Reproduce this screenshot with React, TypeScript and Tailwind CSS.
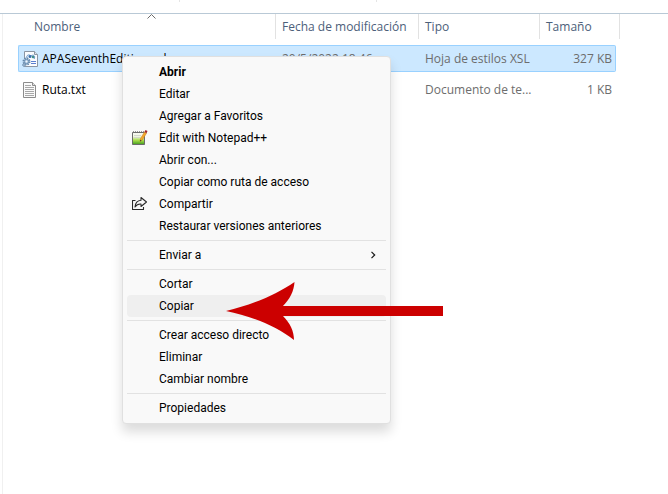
import clsx from "clsx"
import type { ReactNode } from "react"

type FileRow = {
  name: string
  date: string
  type: string
  size: string
  selected?: boolean
  icon: ReactNode
}

type MenuItem = {
  label: string
  icon?: ReactNode
  bold?: boolean
  active?: boolean
  submenu?: boolean
}

function XslIcon() {
  return (
    <svg className="h-4 w-4 shrink-0" viewBox="0 0 16 16" fill="none">
      <path d="M2.5.5h10l3 3v12h-13z" fill="#fbfcfe" stroke="#8b95a3" />
      <path d="M12.5.5v3h3" fill="#dfe5ee" stroke="#8b95a3" />
      <path d="M5 7c-1-3 2-4 4-2 2-2 5 0 3 3" stroke="#5f93c8" />
      <circle cx="8" cy="5.5" r="1.5" fill="#3a6fae" />
      <circle cx="11" cy="6" r="1.2" fill="#3f8f86" />
      <path d="M9 10.5h5M9 12.5h5" stroke="#5b7fd0" />
      <circle cx="4.5" cy="10.5" r="3.2" fill="#c6d8ea" stroke="#6689ab" strokeWidth="1.6" strokeDasharray="1.5 1" />
      <circle cx="4.5" cy="10.5" r="2.2" fill="#a7c2dc" stroke="#6c8fb2" />
      <circle cx="4.5" cy="10.5" r="1" fill="#f2f7fc" />
      <circle cx="2" cy="14" r="1.3" fill="#b4cbe0" stroke="#7292b2" />
    </svg>
  )
}

function TextIcon() {
  return (
    <svg className="h-4 w-4 shrink-0" viewBox="0 0 16 16" fill="none">
      <path d="M1.500.5h9l3 3v12h-12z" fill="#fafafa" stroke="#8c8c8c" />
      <path d="M10.5.5v3h3" fill="#e2e2e2" stroke="#8c8c8c" />
      <path d="M3 3.5h6M3 5.5h9M3 7.5h9M3 9.5h9M3 11.5h9M3 13.5h9" stroke="#a8a8a8" />
    </svg>
  )
}

function NotepadIcon() {
  return (
    <svg className="h-4 w-4" viewBox="0 0 16 16" fill="none">
      <defs>
        <linearGradient id="pad" x1="0" y1="0" x2="0" y2="1">
          <stop offset="0.3" stopColor="#f6f8ee" />
          <stop offset="0.65" stopColor="#a8dd4a" />
          <stop offset="1" stopColor="#3f9a1d" />
        </linearGradient>
      </defs>
      <path d="M.5 2.500h12v12H.5z" fill="url(#pad)" stroke="#6b6b6b" />
      <path d="M1 1.500h11" stroke="#999" strokeDasharray="1 1" />
      <path d="M2 5.500h7M2 7.500h6" stroke="#d3d9cc" />
      <path d="M8 11.500l.5-3L12.500 2l2 1.200-4 6.500z" fill="#f2a62b" stroke="#c97c18" strokeWidth="0.5" />
      <path d="M12.500 2l1-2 2 1-1 2.200z" fill="#a3262a" />
      <path d="M8 11.500l.3-1.800 1.200.7z" fill="#333" />
    </svg>
  )
}

function ShareIcon() {
  return (
    <svg className="h-4 w-4" viewBox="0 0 16 16" fill="none" stroke="#2b2b2b" strokeWidth="1.1" strokeLinejoin="round">
      <path d="M3.500 4.500H.5v9h11V11" />
      <path d="M9 1.500l5.500 4.500L9 10.500V8C6.500 7.800 4.500 8.800 3 11c.3-3.800 2.500-6.500 6-6.800z" />
    </svg>
  )
}

const columns = ["Nombre", "Fecha de modificación", "Tipo", "Tamaño"]

const files: FileRow[] = [
  {
    name: "APASeventhEdition.xsl",
    date: "20/5/2022 18:46",
    type: "Hoja de estilos XSL",
    size: "327 KB",
    selected: true,
    icon: <XslIcon />,
  },
  {
    name: "Ruta.txt",
    date: "20/5/2022 18:46",
    type: "Documento de te...",
    size: "1 KB",
    icon: <TextIcon />,
  },
]

const menuGroups: MenuItem[][] = [
  [
    { label: "Abrir", bold: true },
    { label: "Editar" },
    { label: "Agregar a Favoritos" },
    { label: "Edit with Notepad++", icon: <NotepadIcon /> },
    { label: "Abrir con..." },
    { label: "Copiar como ruta de acceso" },
    { label: "Compartir", icon: <ShareIcon /> },
    { label: "Restaurar versiones anteriores" },
  ],
  [{ label: "Enviar a", submenu: true }],
  [{ label: "Cortar" }, { label: "Copiar", active: true }],
  [{ label: "Crear acceso directo" }, { label: "Eliminar" }, { label: "Cambiar nombre" }],
  [{ label: "Propiedades" }],
]

function FileTable() {
  return (
    <table className="ml-[15px] w-[602px] table-fixed border-separate border-spacing-0 text-left">
      <colgroup>
        <col />
        <col className="w-[143px]" />
        <col className="w-[121px]" />
        <col className="w-[76px]" />
        <col className="w-1" />
      </colgroup>
      <thead>
        <tr>
          {columns.map((column, i) => (
            <th key={column} className="h-[31px] p-0 align-top font-normal text-[#4c607a]">
              <div
                className={clsx(
                  "relative flex h-[25px] items-center",
                  i === 0 ? "pl-4" : "pl-1.5",
                  i < 3 && "border-r border-[#e2e2e2]"
                )}
              >
                {column}
                {i === 0 && (
                  <svg
                    className="absolute top-0 left-1/2 h-[5px] w-[9px]"
                    viewBox="0 0 9 5"
                    fill="none"
                    stroke="#6b6b6b"
                  >
                    <path d="M.5 4.500l4-4 4 4" />
                  </svg>
                )}
              </div>
            </th>
          ))}
          <td className="h-[31px] p-0 align-top">
            <div className="h-[25px] border-r border-[#e2e2e2]" />
          </td>
        </tr>
      </thead>
      <tbody>
        {files.map((file) => {
          const cell = clsx(
            "flex h-[27px] items-center border-y whitespace-nowrap",
            file.selected ? "border-[#99d1ff] bg-[#cce8ff]" : "border-transparent"
          )
          return (
            <tr key={file.name} className="text-[#6d6d6d]">
              <td className="h-[31px] p-0 align-top">
                <div className={clsx(cell, "gap-1 rounded-l-xs border-l pl-[3px] text-black")}>
                  {file.icon}
                  {file.name}
                </div>
              </td>
              <td className="h-[31px] p-0 align-top">
                <div className={clsx(cell, "pl-1.5")}>{file.date}</div>
              </td>
              <td className="h-[31px] p-0 align-top">
                <div className={clsx(cell, "pl-1.5")}>{file.type}</div>
              </td>
              <td className="h-[31px] p-0 align-top">
                <div className={clsx(cell, "justify-end rounded-r-xs border-r pr-[3px]")}>{file.size}</div>
              </td>
            </tr>
          )
        })}
      </tbody>
    </table>
  )
}

function ContextMenu() {
  return (
    <div
      role="menu"
      className="absolute top-14 left-[122px] w-[269px] rounded-sm border border-[#e0e0e0] bg-[#f9f9f9] p-1 font-['Roboto','Noto_Sans',sans-serif] shadow-[0_8px_12px_rgba(0,0,0,0.14)]"
    >
      {menuGroups.map((group, g) => (
        <div key={g}>
          {g > 0 && <hr className="my-[3px] border-[#e2e2e2]" />}
          {group.map((item) => (
            <button
              key={item.label}
              type="button"
              role="menuitem"
              className={clsx(
                "flex h-[22px] w-full items-center rounded-sm pr-2 text-left text-black",
                item.bold && "font-bold",
                item.active ? "bg-[#efefef]" : "hover:bg-[#efefef]"
              )}
            >
              <span className="flex w-8 shrink-0 pl-[5px]">{item.icon}</span>
              <span className="flex-1">{item.label}</span>
              {item.submenu && (
                <svg className="h-2 w-2" viewBox="0 0 8 8" fill="none" stroke="#1a1a1a" strokeWidth="1.2">
                  <path d="M1.500 .8l3.200 3.200-3.200 3.200" />
                </svg>
              )}
            </button>
          ))}
        </div>
      ))}
    </div>
  )
}

function RedArrow() {
  return (
    <svg className="pointer-events-none absolute top-[282px] left-[226px] h-[58px] w-[217px]" viewBox="0 0 217 58">
      <path
        d="M0 29C25 23 50 13 68.500 0 68 9 64 17 57 24H217V34H57C64 41 68 49 68 58 50 44 25 34 0 29z"
        fill="#cc0000"
      />
    </svg>
  )
}

export default function App() {
  return (
    <main className="relative flex min-h-screen flex-col overflow-hidden bg-white font-['Open_Sans','Noto_Sans',sans-serif] text-[12px] leading-4">
      {/* Bottom edge of the address bar */}
      <div className="flex h-3.5 items-start border-b border-[#b9c9d6]">
        <div className="h-0.5 w-[180px] border-r border-[#e5e5e5]" />
        <div className="h-0.5 w-[197px] border-r border-[#e5e5e5]" />
      </div>
      <div className="ml-0.5 flex-1 border-l border-[#f0f0f0]">
        <FileTable />
      </div>
      <ContextMenu />
      <RedArrow />
    </main>
  )
}
